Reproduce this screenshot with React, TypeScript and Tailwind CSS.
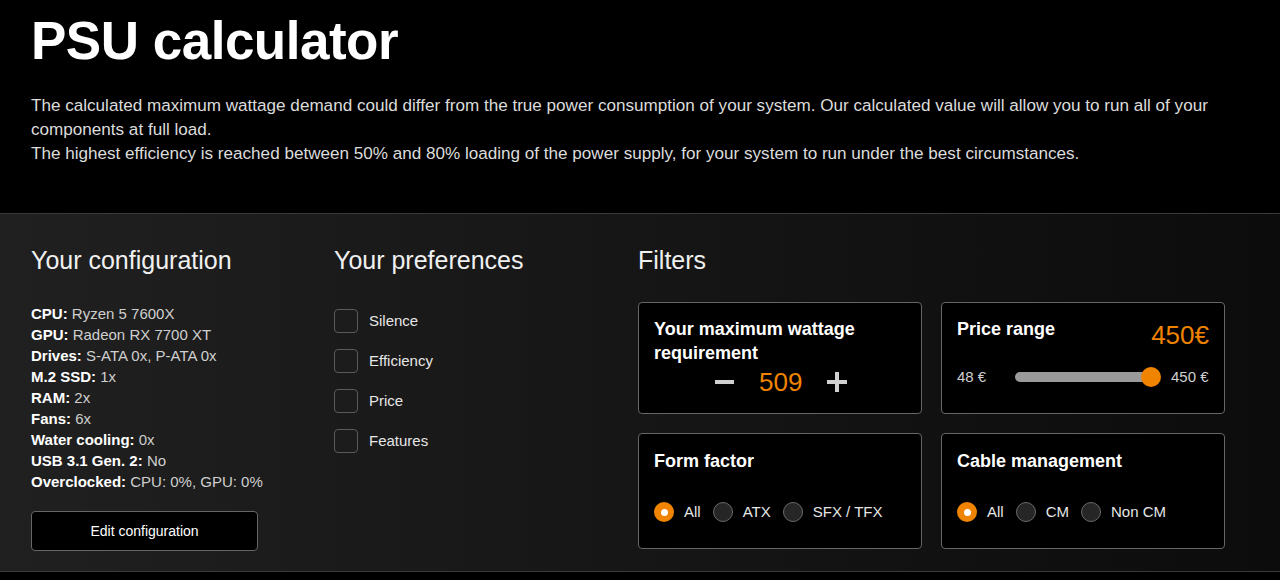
import React from "react";

const font = { fontFamily: '"Liberation Sans", Arial, sans-serif' };

function Radio({ checked, label }: { checked?: boolean; label: string }) {
  return (
    <div className="flex items-center gap-[10px]">
      {checked ? (
        <span className="w-[20px] h-[20px] rounded-full bg-[#f08300] flex items-center justify-center">
          <span className="w-[7px] h-[7px] rounded-full bg-white" />
        </span>
      ) : (
        <span className="w-[20px] h-[20px] rounded-full bg-[#262626] border border-[#6a6a6a]" />
      )}
      <span className="text-[15px] text-[#e6e6e6]">{label}</span>
    </div>
  );
}

export default function App() {
  const config: [string, string][] = [
    ["CPU:", "Ryzen 5 7600X"],
    ["GPU:", "Radeon RX 7700 XT"],
    ["Drives:", "S-ATA 0x, P-ATA 0x"],
    ["M.2 SSD:", "1x"],
    ["RAM:", "2x"],
    ["Fans:", "6x"],
    ["Water cooling:", "0x"],
    ["USB 3.1 Gen. 2:", "No"],
    ["Overclocked:", "CPU: 0%, GPU: 0%"],
  ];
  return (
    <div style={font} className="w-[1280px] h-[580px] bg-black text-white overflow-hidden">
      <div className="px-[31px] pt-[10px] h-[213px]">
        <h1 className="text-[53px] font-bold leading-[62px] tracking-[-0.5px]">PSU calculator</h1>
        <p className="mt-[22px] text-[17.1px] leading-[24px] text-[#dcdcdc] pr-[20px]">
          The calculated maximum wattage demand could differ from the true power consumption of your system. Our calculated value will allow you to run all of your components at full load.
          <br />
          The highest efficiency is reached between 50% and 80% loading of the power supply, for your system to run under the best circumstances.
        </p>
      </div>
      <div className="h-[359px] border-t border-b border-[#3a3a3a] bg-gradient-to-r from-[#202020] to-[#0c0c0c] flex px-[31px] pt-[31px]">
        <div className="w-[303px]">
          <h2 className="text-[25px] leading-[30px] font-light text-[#f0f0f0]">Your configuration</h2>
          <div className="mt-[28px] text-[15px] leading-[21px]">
            {config.map(([k, v]) => (
              <div key={k}>
                <span className="font-bold text-white">{k}</span>{" "}
                <span className="text-[#cfcfcf]">{v}</span>
              </div>
            ))}
          </div>
          <button className="mt-[19px] w-[227px] h-[40px] bg-black border border-[#666] rounded-[4px] text-[14px] text-white">
            Edit configuration
          </button>
        </div>
        <div className="w-[304px]">
          <h2 className="text-[25px] leading-[30px] font-light text-[#f0f0f0]">Your preferences</h2>
          <div className="mt-[34px] flex flex-col gap-[16px]">
            {["Silence", "Efficiency", "Price", "Features"].map((l) => (
              <div key={l} className="flex items-center gap-[11px]">
                <span className="w-[24px] h-[24px] rounded-[4px] border border-[#5a5a5a] bg-[#1c1c1c]" />
                <span className="text-[15px] text-[#e6e6e6]">{l}</span>
              </div>
            ))}
          </div>
        </div>
        <div className="flex-1">
          <h2 className="text-[25px] leading-[30px] font-light text-[#f0f0f0]">Filters</h2>
          <div className="mt-[27px] grid grid-cols-[284px_284px] gap-x-[19px] gap-y-[19px]">
            <div className="h-[112px] bg-black border border-[#666] rounded-[4px] px-[15px] pt-[14px]">
              <div className="text-[18px] font-bold leading-[24px] w-[230px]">Your maximum wattage requirement</div>
              <div className="flex items-center gap-[25px] pl-[61px] mt-[1px]">
                <span className="w-[19px] h-[4px] bg-[#d0d0d0]" />
                <span className="text-[26px] font-light text-[#f08300] leading-[32px]">509</span>
                <span className="relative w-[20px] h-[20px]">
                  <span className="absolute left-0 top-[8px] w-[20px] h-[4px] bg-[#d0d0d0]" />
                  <span className="absolute top-0 left-[8px] w-[4px] h-[20px] bg-[#d0d0d0]" />
                </span>
              </div>
            </div>
            <div className="h-[112px] bg-black border border-[#666] rounded-[4px] px-[15px] pt-[14px]">
              <div className="flex justify-between items-start">
                <span className="text-[18px] font-bold leading-[24px]">Price range</span>
                <span className="text-[26px] font-light text-[#f08300] leading-[36px]">450€</span>
              </div>
              <div className="mt-[13px] flex items-center">
                <span className="text-[15px] text-[#d0d0d0] w-[58px]">48 €</span>
                <div className="relative w-[146px] h-[20px] flex items-center">
                  <div className="w-[140px] h-[10px] rounded-full bg-[#9a9a9a]" />
                  <div className="absolute right-0 top-0 w-[20px] h-[20px] rounded-full bg-[#f08300]" />
                </div>
                <span className="ml-[10px] text-[15px] text-[#d0d0d0]">450 €</span>
              </div>
            </div>
            <div className="h-[116px] bg-black border border-[#666] rounded-[4px] px-[15px] pt-[15px]">
              <div className="text-[18px] font-bold leading-[24px]">Form factor</div>
              <div className="mt-[28px] flex items-center gap-[12px]">
                <Radio checked label="All" />
                <Radio label="ATX" />
                <Radio label="SFX / TFX" />
              </div>
            </div>
            <div className="h-[116px] bg-black border border-[#666] rounded-[4px] px-[15px] pt-[15px]">
              <div className="text-[18px] font-bold leading-[24px]">Cable management</div>
              <div className="mt-[28px] flex items-center gap-[12px]">
                <Radio checked label="All" />
                <Radio label="CM" />
                <Radio label="Non CM" />
              </div>
            </div>
          </div>
        </div>
      </div>
    </div>
  );
}
